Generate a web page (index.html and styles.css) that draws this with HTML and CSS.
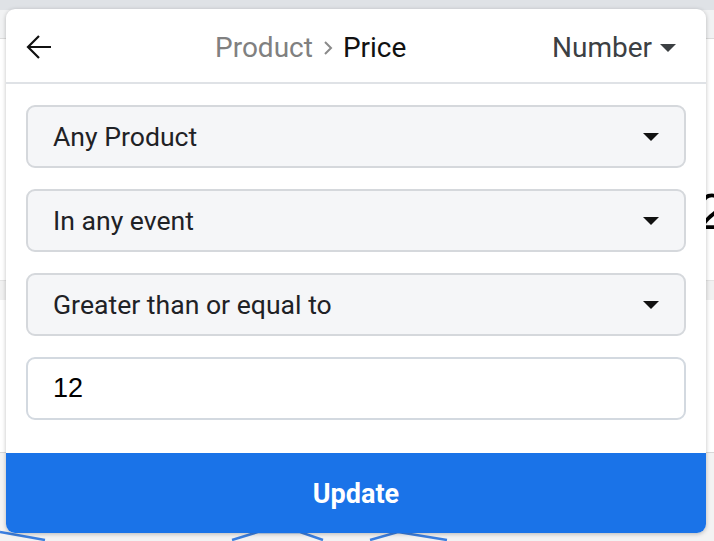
FILE: index.html
```html
<!DOCTYPE html>
<html>
<head>
<meta charset="utf-8">
<link rel="stylesheet" href="styles.css">
</head>
<body>
<div class="page">
  <div class="page-top"></div>
  <div class="page-bar"></div>
  <div class="page-body">
    <div class="big-num">2</div>
  </div>
  <div class="page-band"></div>
  <div class="page-body2"></div>
  <div class="page-chart">
    <svg width="714" height="90" viewBox="0 0 714 90">
      <polyline points="0,81 45,89" fill="none" stroke="#3b7fe0" stroke-width="2.5"/>
      <polyline points="232,89 258,81 300,81 323,89" fill="none" stroke="#3b7fe0" stroke-width="2.5"/>
      <polyline points="370,89 398,81 447,89" fill="none" stroke="#3b7fe0" stroke-width="2.5"/>
    </svg>
  </div>
</div>

<div class="popup">
  <div class="popup-head">
    <button class="back" aria-label="Back">
      <svg width="26" height="26" viewBox="0 0 26 26"><path d="M25 13H2.5M13 2L2 13l11 11" fill="none" stroke="#111" stroke-width="2.2" stroke-linejoin="miter"/></svg>
    </button>
    <div class="crumbs">
      <span class="crumb-muted">Product</span>
      <svg class="chev" width="10" height="16" viewBox="0 0 10 16"><path d="M2 2l6 6-6 6" fill="none" stroke="#8a8a8a" stroke-width="2"/></svg>
      <span class="crumb-cur">Price</span>
    </div>
    <div class="type">Number <span class="caret-dark"></span></div>
  </div>
  <div class="popup-body">
    <div class="select"><span>Any Product</span><span class="caret"></span></div>
    <div class="select"><span>In any event</span><span class="caret"></span></div>
    <div class="select"><span>Greater than or equal to</span><span class="caret"></span></div>
    <div class="input">12</div>
  </div>
  <button class="update">Update</button>
</div>
</body>
</html>
```
FILE: styles.css
```css
* { box-sizing: border-box; }
html, body { margin: 0; padding: 0; }
body {
  width: 714px;
  height: 541px;
  overflow: hidden;
  position: relative;
  font-family: Roboto, "Liberation Sans", sans-serif;
  background: #fff;
}
.page { display: flex; flex-direction: column; height: 541px; }
.page-top { height: 10px; background: #dfe2e6; }
.page-bar { height: 29px; background: #f1f2f3; border-bottom: 1px solid #dcdcdc; }
.page-body { height: 241px; background: #fff; position: relative; }
.big-num {
  position: absolute;
  left: 698px;
  top: 148px;
  font-family: "Liberation Sans", Arial, sans-serif;
  font-size: 50px;
  line-height: 1;
  color: #000;
}
.page-band { height: 20px; background: #f1f1f1; border-top: 1px solid #e4e4e4; }
.page-body2 { height: 153px; background: #fff; border-bottom: 1px solid #d8d8d8; }
.page-chart { flex: 1; background: #f3f3f3; position: relative; overflow: hidden; }
.page-chart svg { position: absolute; left: 0; bottom: 0; }

.popup {
  position: absolute;
  left: 6px;
  top: 9px;
  width: 700px;
  height: 524px;
  background: #fff;
  border-radius: 9px;
  box-shadow: 0 1px 4px rgba(0,0,0,0.25);
  display: flex;
  flex-direction: column;
  overflow: hidden;
}
.popup-head {
  height: 75px;
  flex: none;
  border-bottom: 2px solid #dfe2e6;
  display: flex;
  align-items: center;
  padding: 3px 30px 0 20px;
  position: relative;
}
.back {
  border: 0; background: none; padding: 0; margin: 0;
  width: 26px; height: 26px; display: flex;
}
.crumbs {
  position: absolute;
  left: 209px;
  top: 3px;
  height: 70px;
  display: flex;
  align-items: center;
  gap: 8px;
  font-size: 28px;
}
.crumb-muted { color: #808080; }
.crumb-cur { color: #111; }
.chev { margin: 2px 2px 0 2px; }
.type {
  margin-left: auto;
  font-size: 28px;
  color: #3c4043;
  display: flex;
  align-items: center;
  gap: 8px;
}
.caret-dark {
  width: 0; height: 0;
  border-left: 8.5px solid transparent;
  border-right: 8.5px solid transparent;
  border-top: 8px solid #3c4043;
  margin-top: 2px;
}
.popup-body {
  flex: 1;
  padding: 21px 20px 0 20px;
  display: flex;
  flex-direction: column;
  gap: 21px;
}
.select, .input {
  height: 63px;
  flex: none;
  border: 2px solid #d5d8dc;
  border-radius: 9px;
  background: #f5f6f8;
  display: flex;
  align-items: center;
  justify-content: space-between;
  padding: 0 25px 0 25px;
  font-size: 26.6px;
  color: #1f2226;
}
.caret {
  width: 0; height: 0;
  border-left: 8px solid transparent;
  border-right: 8px solid transparent;
  border-top: 8px solid #111;
  margin-right: 0;
}
.input {
  background: #fff;
  border-color: #d3d9e0;
  font-family: "Liberation Sans", Arial, sans-serif;
  font-size: 27px;
  color: #000;
}
.update {
  height: 80px;
  flex: none;
  border: 0;
  margin: 0;
  background: #1a73e8;
  color: #fff;
  font-family: Roboto, "Liberation Sans", sans-serif;
  font-weight: 700;
  font-size: 27px;
  padding: 2px 0 0 0;
}
```
